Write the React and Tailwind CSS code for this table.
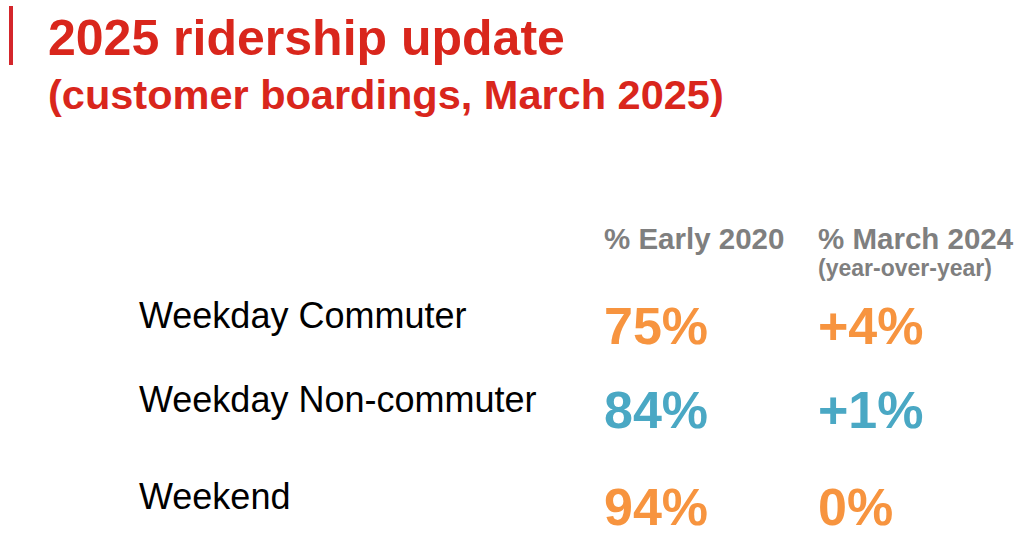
import React from "react";

const F = { fontFamily: '"Liberation Sans", Arial, sans-serif' };

function Row({ label, a, b, colorA, colorB, cls }) {
  return (
    <div className={`grid grid-cols-[465px_214px_1fr] items-start ${cls}`}>
      <div className="mt-[3px] text-[36px] leading-[36px] text-black">{label}</div>
      <div className={`mt-[5px] text-[52px] leading-[52px] font-bold ${colorA}`}>{a}</div>
      <div className={`mt-[5px] text-[52px] leading-[52px] font-bold ${colorB}`}>{b}</div>
    </div>
  );
}

export default function App() {
  return (
    <div className="w-[1024px] h-[560px] bg-white overflow-hidden" style={F}>
      <div className="flex items-start pl-[9px] pt-[6px]">
        <div className="w-[4px] h-[59px] bg-[#d4262b]" />
        <div className="ml-[35px] mt-[7px] text-[#d9261c] font-bold">
          <div className="text-[50px] leading-[50px]">2025 ridership update</div>
          <div className="mt-[11px] text-[41.5px] leading-[42px]">(customer boardings, March 2025)</div>
        </div>
      </div>

      <div className="pl-[139px] mt-[108px]">
        <div className="grid grid-cols-[465px_214px_1fr] items-start text-[#7f7f7f] font-bold">
          <div />
          <div className="text-[29.5px] leading-[29px]">% Early 2020</div>
          <div>
            <div className="text-[29.5px] leading-[29px]">% March 2024</div>
            <div className="mt-[4px] text-[23px] leading-[23px]">(year-over-year)</div>
          </div>
        </div>
        <Row cls="mt-[15px]" label="Weekday Commuter" a="75%" b="+4%" colorA="text-[#f7943f]" colorB="text-[#f7943f]" />
        <Row cls="mt-[27px]" label="Weekday Non-commuter" a="84%" b="+1%" colorA="text-[#4aa8c4]" colorB="text-[#4aa8c4]" />
        <Row cls="mt-[40px]" label="Weekend" a="94%" b="0%" colorA="text-[#f7943f]" colorB="text-[#f7943f]" />
      </div>
    </div>
  );
}
